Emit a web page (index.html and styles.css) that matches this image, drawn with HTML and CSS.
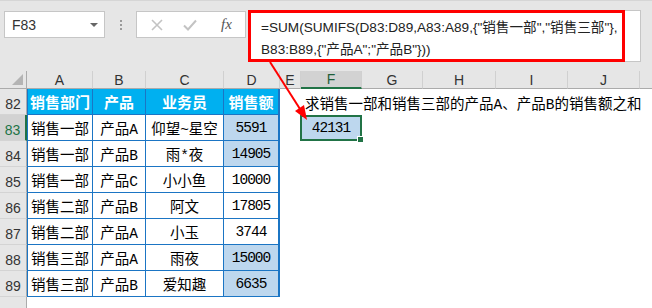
FILE: index.html
```html
<!DOCTYPE html>
<html lang="zh-CN">
<head>
    <meta charset="UTF-8">
    <title>SUMIFS</title>
    <link rel="stylesheet" href="styles.css">
</head>
<body>
    <div class="app">
        <!-- Formula bar -->
        <div class="formula-bar">
            <div class="name-box">
                <span>F83</span>
                <i class="caret"></i>
            </div>
            <div class="grip"><i></i><i></i><i></i></div>
            <div class="fx-box">
                <svg class="ico" width="12" height="12" viewBox="0 0 12 12"><path d="M1 1L11 11M11 1L1 11" stroke="#c3c3c3" stroke-width="1.6" fill="none"/></svg>
                <svg class="ico" width="14" height="12" viewBox="0 0 14 12"><path d="M1 6.5L5 10.5L13 1.5" stroke="#c3c3c3" stroke-width="2" fill="none"/></svg>
                <span class="fx">fx</span>
            </div>
            <div class="formula">
                <div class="formula-text">=SUM(SUMIFS(D83:D89,A83:A89,{"销售一部","销售三部"},<br>B83:B89,{"产品A";"产品B"}))</div>
            </div>
            <div class="formula-rest"></div>
        </div>

        <!-- Sheet -->
        <div class="sheet">
            <div class="corner"><i></i></div>
            <div class="col-head">A</div>
            <div class="col-head">B</div>
            <div class="col-head">C</div>
            <div class="col-head">D</div>
            <div class="col-head">E</div>
            <div class="col-head active">F</div>
            <div class="col-head">G</div>
            <div class="col-head">H</div>
            <div class="col-head">I</div>
            <div class="col-head">J</div>
            <div class="col-head last"></div>

            <div class="row-head">82</div>
            <div class="cell th first">销售部门</div>
            <div class="cell th">产品</div>
            <div class="cell th">业务员</div>
            <div class="cell th last">销售额</div>
            <div></div>
            <div class="note">求销售一部和销售三部的产品A、产品B的销售额之和</div>
            <div></div><div></div><div></div><div></div><div></div>

            <div class="row-head active">83</div>
            <div class="cell first">销售一部</div>
            <div class="cell">产品A</div>
            <div class="cell">仰望~星空</div>
            <div class="cell num hit last">5591</div>
            <div></div>
            <div class="num selected">42131</div>
            <div></div><div></div><div></div><div></div><div></div>

            <div class="row-head">84</div>
            <div class="cell first">销售一部</div>
            <div class="cell">产品B</div>
            <div class="cell">雨*夜</div>
            <div class="cell num hit last">14905</div>
            <div></div><div></div><div></div><div></div><div></div><div></div><div></div>

            <div class="row-head">85</div>
            <div class="cell first">销售一部</div>
            <div class="cell">产品C</div>
            <div class="cell">小小鱼</div>
            <div class="cell num last">10000</div>
            <div></div><div></div><div></div><div></div><div></div><div></div><div></div>

            <div class="row-head">86</div>
            <div class="cell first">销售二部</div>
            <div class="cell">产品B</div>
            <div class="cell">阿文</div>
            <div class="cell num last">17805</div>
            <div></div><div></div><div></div><div></div><div></div><div></div><div></div>

            <div class="row-head">87</div>
            <div class="cell first">销售二部</div>
            <div class="cell">产品A</div>
            <div class="cell">小玉</div>
            <div class="cell num last">3744</div>
            <div></div><div></div><div></div><div></div><div></div><div></div><div></div>

            <div class="row-head">88</div>
            <div class="cell first">销售三部</div>
            <div class="cell">产品A</div>
            <div class="cell">雨夜</div>
            <div class="cell num hit last">15000</div>
            <div></div><div></div><div></div><div></div><div></div><div></div><div></div>

            <div class="row-head">89</div>
            <div class="cell first">销售三部</div>
            <div class="cell">产品B</div>
            <div class="cell">爱知趣</div>
            <div class="cell num hit last">6635</div>
            <div></div><div></div><div></div><div></div><div></div><div></div><div></div>

            <div class="row-head"></div>
        </div>

        <!-- Annotation arrow -->
        <svg class="arrow" width="652" height="308" viewBox="0 0 652 308">
            <line x1="270" y1="62" x2="300" y2="109" stroke="#ff0000" stroke-width="2"/>
            <polygon points="307,120 295,111 304,105" fill="#ff0000"/>
        </svg>
    </div>
</body>
</html>
```

FILE: styles.css
```css
body {
    margin: 0;
    padding: 0;
    background-color: #ffffff;
    font-family: 'Liberation Sans', 'Noto Sans CJK SC', sans-serif;
}
.app {
    position: relative;
    width: 652px;
    height: 308px;
    overflow: hidden;
}

/* formula bar */
.formula-bar {
    height: 71px;
    background-color: #e6e6e6;
    border-top: 1px solid #d6d6d6;
    box-sizing: border-box;
    display: flex;
    align-items: flex-start;
    padding-top: 9px;
    padding-left: 4px;
}
.name-box {
    width: 101px;
    height: 27px;
    box-sizing: border-box;
    margin-top: 1px;
    background-color: #fff;
    border: 1px solid #c6c6c6;
    display: flex;
    align-items: center;
    justify-content: space-between;
    padding: 0 6px 0 7px;
    font-size: 14px;
    color: #333;
}
.caret {
    width: 0;
    height: 0;
    border-left: 4px solid transparent;
    border-right: 4px solid transparent;
    border-top: 4px solid #666;
}
.grip {
    width: 31px;
    display: flex;
    flex-direction: column;
    align-items: center;
    gap: 2px;
    padding-top: 10px;
}
.grip i {
    width: 2px;
    height: 2px;
    background-color: #9a9a9a;
}
.fx-box {
    width: 110px;
    height: 27px;
    box-sizing: border-box;
    margin-top: 1px;
    background-color: #fff;
    border: 1px solid #c6c6c6;
    display: flex;
    align-items: center;
    gap: 20px;
    padding-left: 14px;
}
.fx {
    font-family: 'Liberation Serif', serif;
    font-style: italic;
    font-size: 15px;
    color: #555;
    margin-left: 4px;
}
.formula {
    width: 377px;
    height: 52px;
    box-sizing: border-box;
    margin-left: 2px;
    background-color: #fff;
    border: 3px solid #ff0000;
    padding: 4px 0 0 10px;
}
.formula-text {
    font-size: 13.6px;
    line-height: 22px;
    color: #222;
    white-space: nowrap;
}
.formula-rest {
    width: 16px;
    height: 52px;
    background-color: #fff;
    border: 1px solid #c6c6c6;
    border-left: none;
    box-sizing: border-box;
}

/* sheet */
.sheet {
    display: grid;
    grid-template-columns: 27px 66px 53px 78px 56px 21px 61px 61px 73px 72px 72px 1fr;
    grid-template-rows: 18px repeat(9, 26px);
    font-family: 'Liberation Mono', 'Noto Sans CJK SC', monospace;
    font-size: 14.5px;
    color: #000;
}
.sheet > div {
    box-sizing: border-box;
}
.corner {
    background-color: #e6e6e6;
    border-right: 1px solid #ababab;
    border-bottom: 1px solid #ababab;
    position: relative;
}
.corner i {
    position: absolute;
    right: 3px;
    bottom: 3px;
    width: 0;
    height: 0;
    border-left: 11px solid transparent;
    border-bottom: 11px solid #b4b4b4;
}
.col-head {
    background-color: #e6e6e6;
    border-right: 1px solid #d0d0d0;
    border-bottom: 1px solid #ababab;
    font-family: 'Liberation Sans', sans-serif;
    font-size: 14px;
    color: #333;
    display: flex;
    align-items: center;
    justify-content: center;
}
.col-head.active {
    background-color: #d2d2d2;
    border-bottom: 2px solid #217346;
    color: #1e5e38;
}
.col-head.last {
    border-right: none;
}
.row-head {
    background-color: #e6e6e6;
    border-right: 1px solid #ababab;
    border-bottom: 1px solid #d4d4d4;
    font-family: 'Liberation Sans', sans-serif;
    font-size: 14px;
    color: #333;
    display: flex;
    align-items: flex-end;
    justify-content: center;
    padding-bottom: 2px;
}
.row-head.active {
    background-color: #d2d2d2;
    border-right: 2px solid #217346;
    color: #217346;
}
.cell {
    border-right: 1px solid #1b75c4;
    border-bottom: 1px solid #1b75c4;
    display: flex;
    align-items: center;
    justify-content: center;
    white-space: nowrap;
}
.cell.first {
    border-left: 1px solid #1b75c4;
}
.cell.last {
    border-right: 2px solid #1b75c4;
}
.th {
    background-color: #00b0f0;
    color: #fff;
    font-family: 'Noto Sans CJK SC', sans-serif;
    font-weight: bold;
    font-size: 15px;
}
.num {
    letter-spacing: -1px;
}
.hit {
    background-color: #bdd7ee;
}
.note {
    white-space: nowrap;
    padding-left: 4px;
    display: flex;
    align-items: center;
}
.selected {
    position: relative;
    background-color: #bdd7ee;
    border: 2px solid #217346;
    margin-left: -1px;
    display: flex;
    align-items: center;
    justify-content: center;
}
.selected::after {
    content: '';
    position: absolute;
    right: -4px;
    bottom: -4px;
    width: 5px;
    height: 5px;
    background-color: #217346;
    border: 1px solid #fff;
}
.arrow {
    position: absolute;
    left: 0;
    top: 0;
    pointer-events: none;
}
```
